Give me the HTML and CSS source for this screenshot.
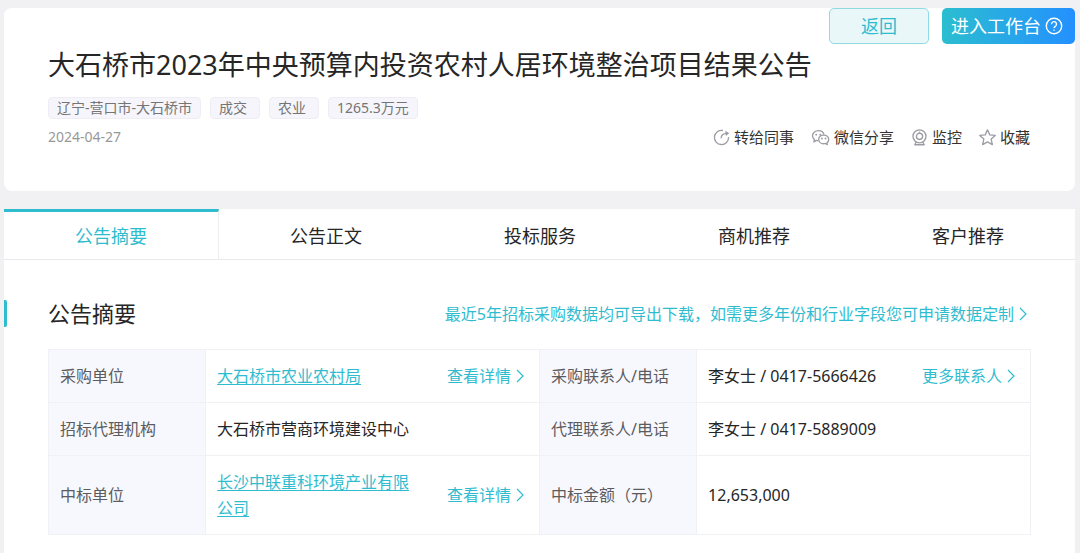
FILE: index.html
```html
<!DOCTYPE html>
<html lang="zh-CN">
<head>
<meta charset="utf-8">
<meta name="viewport" content="width=device-width, initial-scale=1">
<title>大石桥市2023年中央预算内投资农村人居环境整治项目结果公告</title>
<link rel="stylesheet" href="styles.css">
</head>
<body>
<svg class="sprite" aria-hidden="true">
  <symbol id="chevron" viewBox="0 0 8 14"><path d="M1 1l6 6-6 6"/></symbol>
</svg>
<header class="card">
  <div class="top-buttons">
    <button type="button" class="btn btn-back">返回</button>
    <button type="button" class="btn btn-work">进入工作台
      <svg class="help" viewBox="0 0 18 18" aria-hidden="true"><circle cx="9" cy="9" r="7.7"/><path d="M6.500 7.200a2.500 2.500 0 1 1 3.800 2.100C9.400 9.900 9 10.200 9 11.100"/><path d="M9 12.600v1.200"/></svg>
    </button>
  </div>
  <div class="card-body">
    <h1 class="title">大石桥市2023年中央预算内投资农村人居环境整治项目结果公告</h1>
    <div class="tags">
      <span class="tag">辽宁-营口市-大石桥市</span>
      <span class="tag">成交</span>
      <span class="tag">农业</span>
      <span class="tag">1265.3万元</span>
    </div>
    <div class="meta">
      <time class="date" datetime="2024-04-27">2024-04-27</time>
      <div class="actions">
        <button type="button" class="action">
          <svg class="icon" viewBox="0 0 18 18" aria-hidden="true"><path d="M10.500 1.600A7.500 7.500 0 1 0 16.500 8.600"/><path d="M8.600 9.800c0-3.200 2.200-5 6-5.200"/><path class="solid" d="M13 1.900l4.200 2.600-3.600 3z"/></svg>转给同事</button>
        <button type="button" class="action">
          <svg class="icon icon-wide" viewBox="0 0 19 18" aria-hidden="true"><path d="M7.200 12.200c-.8.1-1.500 0-2.200-.2l-2.400 1.600.4-2.600C1.700 10 1 8.600 1 7.200c0-3 2.800-5.400 6.200-5.400 3 0 5.400 1.700 6 4.200"/><path d="M12.900 6.400c-3 0-5.300 2-5.300 4.600s2.300 4.600 5.300 4.600c.6 0 1.200-.1 1.800-.3l2 1.200-.3-2.100c1.100-.8 1.800-2.100 1.800-3.400 0-2.600-2.300-4.600-5.300-4.600z"/><g class="solid"><circle cx="5" cy="6" r="1"/><circle cx="9.200" cy="6" r="1"/><circle cx="11" cy="10" r="1"/><circle cx="14.800" cy="10" r="1"/></g></svg>微信分享</button>
        <button type="button" class="action">
          <svg class="icon" viewBox="0 0 18 18" aria-hidden="true"><circle cx="9" cy="7.800" r="6.900"/><circle cx="9" cy="7.800" r="3.300"/><path d="M9 2.600v1M5.600 13.800l-1.600 2.900h10l-1.600-2.900"/></svg>监控</button>
        <button type="button" class="action">
          <svg class="icon" viewBox="0 0 18 18" aria-hidden="true"><path d="M9 .9l2.400 5.300 5.800.6-4.300 3.900 1.200 5.900L9 13.700l-5.100 2.900 1.200-5.900L.8 6.800l5.800-.6z"/></svg>收藏</button>
      </div>
    </div>
  </div>
</header>

<main class="panel">
  <nav class="tabs">
    <a class="tab active" href="#summary" aria-current="page">公告摘要</a>
    <a class="tab" href="#body">公告正文</a>
    <a class="tab" href="#bid">投标服务</a>
    <a class="tab" href="#leads">商机推荐</a>
    <a class="tab" href="#clients">客户推荐</a>
  </nav>
  <section id="summary">
    <div class="section-head">
      <h2 class="section-title">公告摘要</h2>
      <a class="more" href="#custom">最近5年招标采购数据均可导出下载，如需更多年份和行业字段您可申请数据定制<svg class="chevron" aria-hidden="true"><use href="#chevron"/></svg></a>
    </div>
    <div class="table-wrap">
      <table class="info">
        <colgroup><col class="col-label"><col class="col-value"><col class="col-label"><col class="col-value"></colgroup>
        <tbody>
          <tr>
            <th scope="row">采购单位</th>
            <td><div class="cell"><a class="company" href="#buyer">大石桥市农业农村局</a><a class="more" href="#buyer-detail">查看详情<svg class="chevron" aria-hidden="true"><use href="#chevron"/></svg></a></div></td>
            <th scope="row">采购联系人/电话</th>
            <td><div class="cell"><span>李女士 / 0417-5666426</span><a class="more" href="#contacts">更多联系人<svg class="chevron" aria-hidden="true"><use href="#chevron"/></svg></a></div></td>
          </tr>
          <tr>
            <th scope="row">招标代理机构</th>
            <td>大石桥市营商环境建设中心</td>
            <th scope="row">代理联系人/电话</th>
            <td>李女士 / 0417-5889009</td>
          </tr>
          <tr>
            <th scope="row">中标单位</th>
            <td><div class="cell"><a class="company" href="#winner">长沙中联重科环境产业有限公司</a><a class="more" href="#winner-detail">查看详情<svg class="chevron" aria-hidden="true"><use href="#chevron"/></svg></a></div></td>
            <th scope="row">中标金额（元）</th>
            <td>12,653,000</td>
          </tr>
        </tbody>
      </table>
    </div>
  </section>
</main>
</body>
</html>
```
FILE: styles.css
```css
* { box-sizing: border-box; }

body {
  margin: 0;
  min-height: 100vh;
  padding: 8px 5px 0 4px;
  display: flex;
  flex-direction: column;
  gap: 18px;
  background: #f1f1f4;
  color: #262626;
  font: 16px/26px "Noto Sans", "Noto Sans CJK SC", sans-serif;
}

h1, h2 { margin: 0; font-weight: 400; }
a { color: inherit; text-decoration: none; }
button { font: inherit; color: inherit; cursor: pointer; }
svg { flex: none; fill: none; stroke: currentColor; }
.sprite { position: absolute; width: 0; height: 0; }

/* Header card */
.card { background: #fff; border-radius: 8px; }
.top-buttons { display: flex; justify-content: flex-end; gap: 13px; }
.btn {
  display: flex;
  align-items: center;
  justify-content: center;
  height: 36px;
  border-radius: 5px;
  font-size: 18px;
}
.btn-back {
  width: 100px;
  padding: 0;
  border: 1px solid #8edbe4;
  background: #e9f7f9;
  color: #30bccf;
}
.btn-work {
  gap: 4px;
  padding: 0 12px 0 9px;
  border: 0;
  background: linear-gradient(90deg, #2bbed0, #2490ff);
  color: #fff;
}
.help { width: 18px; height: 18px; stroke-width: 1.4; }

.card-body { padding: 3px 45px 43px 44px; }
.title { font-size: 27px; line-height: 36px; }
.tags { display: flex; flex-wrap: wrap; gap: 9px; margin-top: 14px; }
.tag {
  min-width: 50px;
  padding: 0 8px;
  border: 1px solid #ededf3;
  border-radius: 4px;
  background: #f5f5fb;
  color: #757575;
  font-size: 14px;
  line-height: 20px;
}
.meta {
  display: flex;
  align-items: center;
  justify-content: space-between;
  margin-top: 7px;
  line-height: 22px;
}
.date { color: #999; font-size: 14px; }
.actions { display: flex; gap: 17px; }
.action {
  display: flex;
  align-items: center;
  gap: 4px;
  padding: 0;
  border: 0;
  background: none;
  color: #333;
  font-size: 15px;
}
.icon { width: 17px; height: 17px; color: #9c9ca4; stroke-width: 1.4; stroke-linejoin: round; }
.icon-wide { width: 19px; }
.solid { fill: currentColor; stroke: none; }

/* Tabs */
.panel { flex: 1; background: #fff; }
.tabs { display: flex; }
.tab {
  flex: 1;
  padding: 14px 0 10px;
  border-bottom: 1px solid #e9e9ec;
  font-size: 18px;
  text-align: center;
}
.tab.active {
  padding-top: 11px;
  border-top: 3px solid #30bccf;
  border-right: 1px solid #ededf0;
  color: #30bccf;
}

/* Summary section */
.section-head {
  display: flex;
  align-items: center;
  justify-content: space-between;
  padding: 40px 48px 22px 0;
}
.section-title {
  display: flex;
  gap: 41px;
  font-size: 22px;
  line-height: 27px;
}
.section-title::before {
  content: "";
  width: 3px;
  border-radius: 0 2px 2px 0;
  background: #30bccf;
}
.more {
  display: inline-flex;
  flex: none;
  align-items: center;
  gap: 5px;
  color: #30bccf;
}
.chevron { width: 8px; height: 14px; stroke-width: 1.2; }

.table-wrap { padding: 0 44px 19px 44px; }
.info { width: 100%; table-layout: fixed; border-collapse: collapse; }
.col-label { width: 16%; }
.col-value { width: 34%; }
.info th, .info td {
  padding: 13px 15px 13px 11px;
  border: 1px solid #f0f0f5;
  font-weight: 400;
  text-align: left;
}
.info th { padding-right: 0; background: #f7f8fd; color: #5c5c5f; }
.cell { display: flex; align-items: center; justify-content: space-between; gap: 24px; }
.company { color: #30bccf; text-decoration: underline; text-underline-offset: 2px; }
```
